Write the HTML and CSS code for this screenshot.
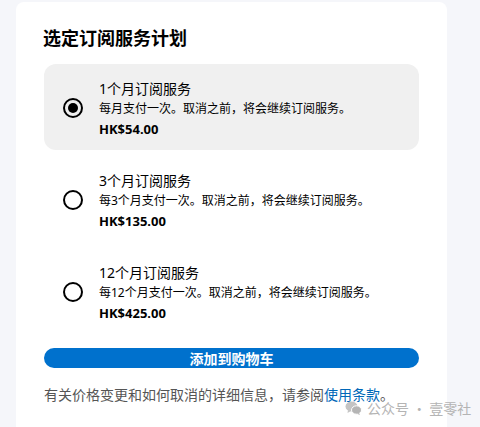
FILE: index.html
```html
<!DOCTYPE html>
<html lang="zh">
<head>
<meta charset="utf-8">
<link rel="stylesheet" href="styles.css">
</head>
<body>
<div class="card">
  <h1 class="title">选定订阅服务计划</h1>
  <div class="options">
    <div class="option selected">
      <span class="radio"><span class="dot"></span></span>
      <div class="info">
        <div class="name">1个月订阅服务</div>
        <div class="desc">每月支付一次。取消之前，将会继续订阅服务。</div>
        <div class="price">HK$54.00</div>
      </div>
    </div>
    <div class="option">
      <span class="radio"></span>
      <div class="info">
        <div class="name">3个月订阅服务</div>
        <div class="desc">每3个月支付一次。取消之前，将会继续订阅服务。</div>
        <div class="price">HK$135.00</div>
      </div>
    </div>
    <div class="option">
      <span class="radio"></span>
      <div class="info">
        <div class="name">12个月订阅服务</div>
        <div class="desc">每12个月支付一次。取消之前，将会继续订阅服务。</div>
        <div class="price">HK$425.00</div>
      </div>
    </div>
  </div>
  <button class="cart">添加到购物车</button>
  <p class="note">有关价格变更和如何取消的详细信息，请参阅<a class="link">使用条款</a>。</p>
</div>
<div class="watermark">
  <svg class="wx" width="17" height="14" viewBox="0 0 17 14">
    <ellipse cx="6.5" cy="5.5" rx="6" ry="5" fill="#c4c4c4"/>
    <path d="M3 9 L2.5 12 L6 10 Z" fill="#c4c4c4"/>
    <ellipse cx="11.5" cy="9" rx="5" ry="4.2" fill="#b5b5b5" stroke="#fff" stroke-width="1"/>
    <path d="M14 12 L15 14 L12 12.8 Z" fill="#b5b5b5"/>
  </svg>
  <span>公众号 · 壹零社</span>
</div>
</body>
</html>
```

FILE: styles.css
```css
html, body {
  margin: 0;
  padding: 0;
  height: 100%;
  overflow: hidden;
}
body {
  background: #f5f6fa;
  font-family: "Noto Sans", "Noto Sans CJK SC", sans-serif;
  color: #000;
  position: relative;
}
.card {
  margin: 2px 0 0 16px;
  width: 431px;
  height: 425px;
  box-sizing: border-box;
  background: #fff;
  border-radius: 8px 8px 0 0;
  padding: 20px 28px 0 28px;
}
.title {
  margin: 0 0 12px -1px;
  font-size: 18px;
  line-height: 30px;
  font-weight: 700;
  font-family: "Noto Sans CJK SC", sans-serif;
}
.options {
  display: flex;
  flex-direction: column;
  gap: 6px;
}
.option {
  height: 86px;
  box-sizing: border-box;
  display: flex;
  align-items: center;
  padding: 0 0 0 19px;
  gap: 16px;
  border-radius: 12px;
}
.option.selected {
  background: #f0f0f0;
}
.radio {
  width: 20px;
  height: 20px;
  box-sizing: border-box;
  border: 2px solid #000;
  border-radius: 50%;
  display: flex;
  align-items: center;
  justify-content: center;
  flex: none;
  margin-top: 2px;
}
.dot {
  width: 10px;
  height: 10px;
  border-radius: 50%;
  background: #000;
}
.info {
  display: flex;
  flex-direction: column;
  margin-top: 4px;
}
.name {
  font-size: 14px;
  line-height: 20px;
}
.desc {
  font-size: 12px;
  line-height: 19px;
}
.price {
  font-size: 13px;
  line-height: 22px;
  font-weight: 700;
}
.cart {
  display: block;
  width: 100%;
  height: 20px;
  margin-top: 14px;
  border: none;
  border-radius: 10px;
  background: #0071cd;
  color: #fff;
  font-family: "Noto Sans CJK SC", sans-serif;
  font-size: 14px;
  font-weight: 700;
  line-height: 20px;
  padding: 0;
}
.note {
  margin: 16px 0 0 0;
  font-size: 14px;
  line-height: 20px;
  color: #555;
  font-family: "Noto Sans CJK SC", sans-serif;
}
.link {
  color: #0067b8;
}
.watermark {
  position: absolute;
  left: 345px;
  top: 398px;
  display: flex;
  align-items: center;
  gap: 5px;
  color: #b4b4b4;
  font-family: "Noto Sans CJK SC", sans-serif;
  font-size: 14px;
  line-height: 20px;
}
.wx {
  display: block;
}
```
